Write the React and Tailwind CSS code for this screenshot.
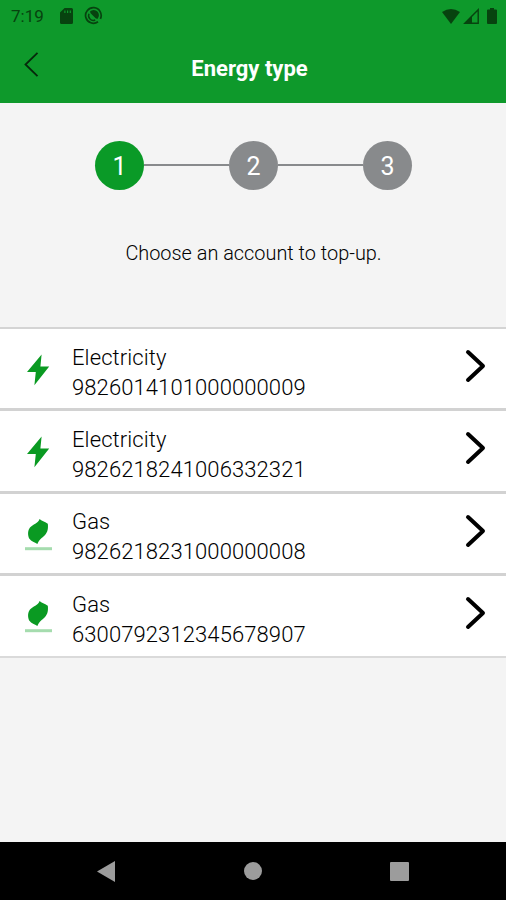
import React from 'react';

const accounts = [
    { type: 'Electricity', number: '9826014101000000009' },
    { type: 'Electricity', number: '9826218241006332321' },
    { type: 'Gas', number: '9826218231000000008' },
    { type: 'Gas', number: '6300792312345678907' }
];

const StatusBar = () => (
    <div className="flex h-8 items-center pl-[11px] pr-[9px] text-[#07430f]">
        <span className="w-[49px] text-[17px] leading-8">7:19</span>
        <svg width="13" height="16" viewBox="0 0 13 16" fill="currentColor" aria-hidden="true">
            <path fillRule="evenodd" d="M4.6 0H11.5Q13 0 13 1.5V14.5Q13 16 11.5 16H1.5Q0 16 0 14.5V4.6ZM4.3 2.5V5H5.5V2.5ZM7 2.5V5H8.2V2.5ZM9.7 2.5V5H10.9V2.5Z" />
        </svg>
        <svg className="-mt-px ml-[11px]" width="19" height="19" viewBox="0 0 19 19" fill="none" stroke="currentColor" aria-hidden="true">
            <path d="M14 15.7A7.8 7.8 0 1 1 16.4 12.8" strokeWidth="1.7" />
            <path d="M5 7.8A4.7 4.7 0 0 0 11.2 14" strokeWidth="1.4" />
            <path d="M6 5.6A5 5 0 0 1 13.4 13L11.6 12.2L6.6 7.2Z" fill="currentColor" stroke="none" />
        </svg>
        <div className="ml-auto flex items-center">
            <svg width="18" height="15" viewBox="0 0 18 15" fill="currentColor" aria-hidden="true">
                <path d="M0 3Q9 -3 18 3L9 15Z" />
            </svg>
            <svg className="ml-[3px]" width="16" height="16" viewBox="0 0 16 16" aria-hidden="true">
                <path d="M1.8 15.2H15.2V1.8Z" fill="none" stroke="currentColor" strokeWidth="1.4" />
                <path d="M1 15.8L9 7.5V15.8Z" fill="currentColor" />
            </svg>
            <svg className="ml-2" width="10" height="16" viewBox="0 0 10 16" fill="currentColor" aria-hidden="true">
                <path d="M3 0H7V1.6H9Q10 1.6 10 2.6V15Q10 16 9 16H1Q0 16 0 15V2.6Q0 1.6 1 1.6H3Z" />
            </svg>
        </div>
    </div>
);

const StepCircle = ({ number, active }) => (
    <div className={`flex size-[49px] items-center justify-center rounded-full pt-[3px] text-[25px] text-white ${active ? 'bg-[#0a9a27]' : 'bg-[#888a8c]'}`}>
        {number}
    </div>
);

const BoltIcon = () => (
    <svg width="28" height="32" viewBox="0 0 28 32" fill="#0a9a22" aria-hidden="true">
        <path d="M17.6 0.6L3 18H11.8L10.4 31.2L25.2 12.6H16.4Z" />
    </svg>
);

const FlameIcon = () => (
    <svg width="28" height="34" viewBox="0 0 28 34" aria-hidden="true">
        <path d="M15.6 0C17.5 2.2 20.5 2.2 23.8 4.8C24.3 9 24 13 20.8 16.2C18 19 15 20.5 13.4 25C10.5 23.4 7.5 22.8 5.2 19.6C3.6 16 3.6 11.5 6 8.5C8.8 5.2 14.2 4.6 15.6 0Z" fill="#0a9a22" />
        <path d="M1 28.2H28V31.2H1Z" fill="#a5dcae" />
    </svg>
);

const AccountRow = ({ account }) => (
    <button type="button" className="flex h-[82.4px] w-full items-start border-b-3 border-[#d2d2d2] bg-white pl-6 pr-5 text-left last:h-[81.5px] last:border-b-2 last:border-[#dadada]">
        <span className="mt-[25px] w-12">
            {account.type === 'Gas' ? <FlameIcon /> : <BoltIcon />}
        </span>
        <span className="mt-[13.6px] flex-1 text-[22px] font-light leading-[30px] tracking-[0.1px] text-black">
            <span className="block">{account.type}</span>
            <span className="block">{account.number}</span>
        </span>
        <svg className="mt-5" width="21" height="34" viewBox="0 0 21 34" fill="none" stroke="black" strokeWidth="4" strokeLinecap="round" strokeLinejoin="round" aria-hidden="true">
            <path d="M3 3L18 17L3 31" />
        </svg>
    </button>
);

const NavigationBar = () => (
    <div className="flex h-[58px] items-center justify-between bg-black px-[97px]">
        <svg width="18" height="21" viewBox="0 0 18 21" fill="#9c9c9c" aria-hidden="true"><path d="M0 10.5L18 0V21Z" /></svg>
        <span className="size-[18px] rounded-full bg-[#9c9c9c]" />
        <span className="size-[19px] rounded-[1px] bg-[#9c9c9c]" />
    </div>
);

const App = () => {
    return (
        <div className="flex h-[900px] w-[506px] flex-col bg-[#f4f4f4] font-['Roboto','Liberation_Sans',sans-serif]">
            <header className="h-[103px] bg-[#0e992b]">
                <StatusBar />
                <div className="grid grid-cols-[60px_1fr_67px] items-start">
                    <button type="button" aria-label="Back" className="ml-6 mt-5 w-4">
                        <svg width="15" height="25" viewBox="0 0 15 25" fill="none" stroke="#06280b" strokeWidth="1.8" aria-hidden="true">
                            <path d="M13.5 0.8L1.5 12.5L13.5 24.2" />
                        </svg>
                    </button>
                    <h1 className="mt-[21px] text-center text-[22px] font-bold leading-8 text-white">Energy type</h1>
                </div>
            </header>

            <main className="flex-1">
                <div className="flex items-center justify-center pl-px pt-[38px]">
                    <StepCircle number={1} active />
                    <div className="mb-[1.5px] h-0.5 w-[85px] bg-[#888a8c]" />
                    <StepCircle number={2} />
                    <div className="mb-[1.5px] h-0.5 w-[85px] bg-[#888a8c]" />
                    <StepCircle number={3} />
                </div>
                <p className="mt-[48px] pl-px text-center text-[19.9px] font-light leading-8 text-black">Choose an account to top-up.</p>

                <div className="mt-[57px] border-t-2 border-[#d4d4d4]">
                    {accounts.map((account) => (
                        <AccountRow key={account.number} account={account} />
                    ))}
                </div>
            </main>

            <NavigationBar />
        </div>
    );
};

export default App;
